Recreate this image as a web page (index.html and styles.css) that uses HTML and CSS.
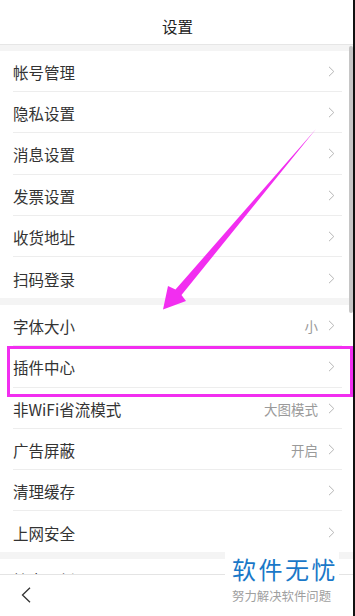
FILE: index.html
```html
<!DOCTYPE html>
<html lang="zh-CN">
<head>
<meta charset="utf-8">
<title>设置</title>
<link rel="stylesheet" href="styles.css">
</head>
<body>
<div class="phone">
  <header class="topbar"><h1 class="title">设置</h1></header>
  <main class="content">
    <section class="group">
      <div class="row"><span class="label">帐号管理</span><svg class="chev" width="7" height="11" viewBox="0 0 7 11"><path d="M1 0.8 L5.8 5.5 L1 10.2" fill="none" stroke="#b5b5b5" stroke-width="1"/></svg></div>
      <div class="row"><span class="label">隐私设置</span><svg class="chev" width="7" height="11" viewBox="0 0 7 11"><path d="M1 0.8 L5.8 5.5 L1 10.2" fill="none" stroke="#b5b5b5" stroke-width="1"/></svg></div>
      <div class="row"><span class="label">消息设置</span><svg class="chev" width="7" height="11" viewBox="0 0 7 11"><path d="M1 0.8 L5.8 5.5 L1 10.2" fill="none" stroke="#b5b5b5" stroke-width="1"/></svg></div>
      <div class="row"><span class="label">发票设置</span><svg class="chev" width="7" height="11" viewBox="0 0 7 11"><path d="M1 0.8 L5.8 5.5 L1 10.2" fill="none" stroke="#b5b5b5" stroke-width="1"/></svg></div>
      <div class="row"><span class="label">收货地址</span><svg class="chev" width="7" height="11" viewBox="0 0 7 11"><path d="M1 0.8 L5.8 5.5 L1 10.2" fill="none" stroke="#b5b5b5" stroke-width="1"/></svg></div>
      <div class="row last"><span class="label">扫码登录</span><svg class="chev" width="7" height="11" viewBox="0 0 7 11"><path d="M1 0.8 L5.8 5.5 L1 10.2" fill="none" stroke="#b5b5b5" stroke-width="1"/></svg></div>
    </section>
    <section class="group">
      <div class="row"><span class="label">字体大小</span><span class="value">小</span><svg class="chev" width="7" height="11" viewBox="0 0 7 11"><path d="M1 0.8 L5.8 5.5 L1 10.2" fill="none" stroke="#b5b5b5" stroke-width="1"/></svg></div>
      <div class="row highlight"><span class="label">插件中心</span><svg class="chev" width="7" height="11" viewBox="0 0 7 11"><path d="M1 0.8 L5.8 5.5 L1 10.2" fill="none" stroke="#b5b5b5" stroke-width="1"/></svg><span class="hl-box"></span></div>
      <div class="row"><span class="label">非WiFi省流模式</span><span class="value">大图模式</span><svg class="chev" width="7" height="11" viewBox="0 0 7 11"><path d="M1 0.8 L5.8 5.5 L1 10.2" fill="none" stroke="#b5b5b5" stroke-width="1"/></svg></div>
      <div class="row"><span class="label">广告屏蔽</span><span class="value">开启</span><svg class="chev" width="7" height="11" viewBox="0 0 7 11"><path d="M1 0.8 L5.8 5.5 L1 10.2" fill="none" stroke="#b5b5b5" stroke-width="1"/></svg></div>
      <div class="row"><span class="label">清理缓存</span><svg class="chev" width="7" height="11" viewBox="0 0 7 11"><path d="M1 0.8 L5.8 5.5 L1 10.2" fill="none" stroke="#b5b5b5" stroke-width="1"/></svg></div>
      <div class="row last"><span class="label">上网安全</span><svg class="chev" width="7" height="11" viewBox="0 0 7 11"><path d="M1 0.8 L5.8 5.5 L1 10.2" fill="none" stroke="#b5b5b5" stroke-width="1"/></svg></div>
    </section>
    <section class="group">
      <div class="row"><span class="label">检查更新</span><svg class="chev" width="7" height="11" viewBox="0 0 7 11"><path d="M1 0.8 L5.8 5.5 L1 10.2" fill="none" stroke="#b5b5b5" stroke-width="1"/></svg></div>
    </section>
  </main>
  <footer class="bottombar">
    <svg class="back" width="10" height="16" viewBox="0 0 10 16"><path d="M9 0.8 L1.5 8 L9 15.2" fill="none" stroke="#333" stroke-width="1.3"/></svg>
  </footer>

  <svg class="arrow" width="355" height="616" viewBox="0 0 355 616">
    <polygon points="316,129 181.5,295 186,301 163,309.5 168,286 175.5,289.5" fill="#f22ef0"/>
  </svg>
  <div class="scrollthumb"></div>
  <div class="edge"></div>
  <div class="watermark">
    <div class="wm-title">软件无忧</div>
    <div class="wm-sub">努力解决软件问题</div>
  </div>
</div>
</body>
</html>
```
FILE: styles.css
```css
* { box-sizing: border-box; }
html, body { margin: 0; padding: 0; }
body {
  font-family: "Noto Sans CJK SC", "Noto Sans", sans-serif;
  background: #fff;
}
.phone {
  position: relative;
  width: 355px;
  height: 616px;
  overflow: hidden;
  display: flex;
  flex-direction: column;
  background: #f4f4f4;
}
.topbar {
  flex: none;
  height: 45px;
  background: #fff;
  border-bottom: 1px solid #e6e6e6;
  padding-top: 8px;
}
.title {
  margin: 0;
  height: 36px;
  line-height: 36px;
  text-align: center;
  font-size: 15.5px;
  font-weight: normal;
  color: #222;
}
.content {
  flex: 1;
  overflow: hidden;
  padding-top: 6px;
  display: flex;
  flex-direction: column;
  gap: 7px;
}
.group {
  flex: none;
  background: #fff;
  padding: 0 13px;
}
.row {
  position: relative;
  height: 41.2px;
  display: flex;
  align-items: center;
  padding-right: 7px;
  border-bottom: 1px solid #ededed;
}
.row.last { border-bottom: none; }
.label {
  flex: 1;
  font-size: 15.5px;
  color: #333;
  padding-top: 2px;
}
.value {
  font-size: 13.5px;
  color: #9a9a9a;
  margin-right: 10px;
  padding-top: 2px;
}
.chev {
  display: block;
  flex: none;
  margin-top: 1px;
}
.hl-box {
  position: absolute;
  left: -6px;
  right: -11px;
  top: 0;
  height: 51px;
  border: 3px solid #f22ef0;
}
.bottombar {
  position: absolute;
  left: 0;
  right: 0;
  bottom: 0;
  height: 42px;
  background: #fff;
  border-top: 1px solid #e4e4e4;
  display: flex;
  align-items: center;
  padding-left: 21px;
}
.back { display: block; margin-top: -1px; }
.arrow {
  position: absolute;
  left: 0;
  top: 0;
  pointer-events: none;
}
.scrollthumb {
  position: absolute;
  left: 349px;
  top: 46px;
  width: 4px;
  height: 267px;
  border-radius: 2px;
  background: #c6c6c6;
}
.edge {
  position: absolute;
  right: 0;
  top: 0;
  width: 2px;
  height: 616px;
  background: #111;
}
.watermark {
  position: absolute;
  left: 225px;
  top: 552px;
  width: 114px;
  height: 64px;
  background: #fff;
  padding: 4px 0 0 7px;
}
.wm-title {
  font-size: 24px;
  line-height: 26px;
  letter-spacing: 2.5px;
  color: #1a78c8;
  white-space: nowrap;
}
.wm-sub {
  font-size: 12.4px;
  line-height: 16px;
  color: #a0a0a0;
  white-space: nowrap;
  margin-top: 6px;
}
```
